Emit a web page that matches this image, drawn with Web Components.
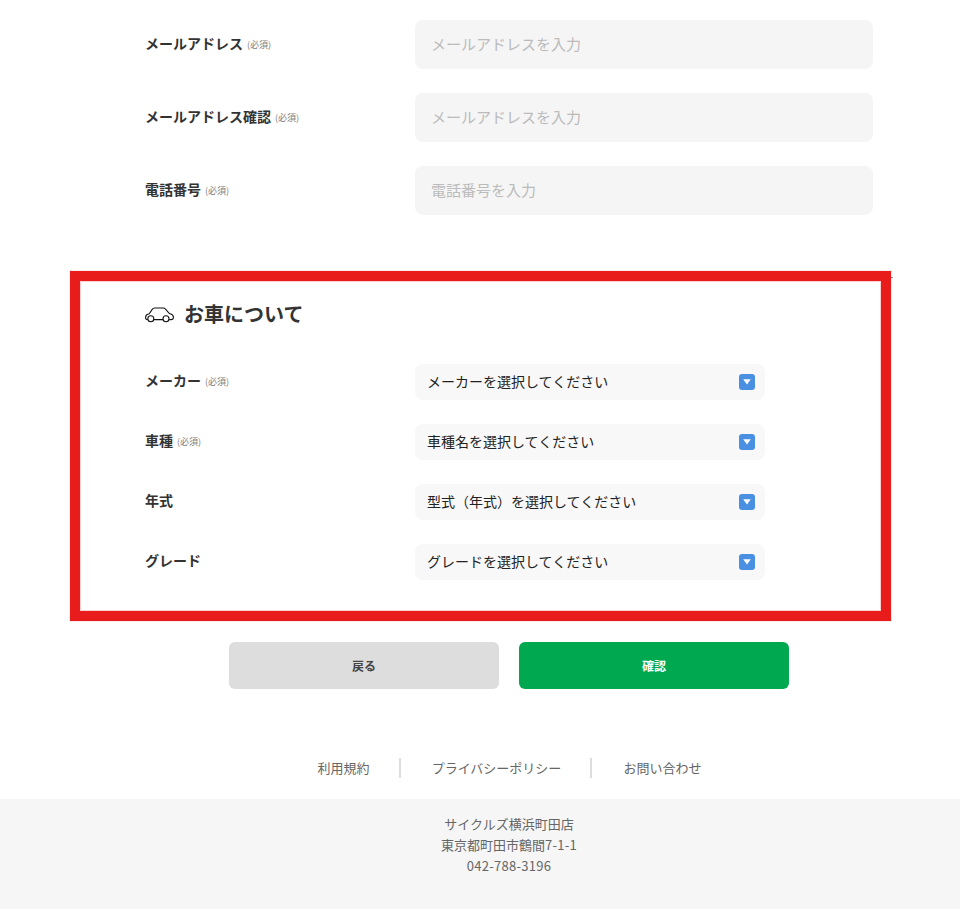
<!DOCTYPE html>
<html lang="ja"><head><meta charset="utf-8"><title>form</title>
<style>
html,body{margin:0;padding:0;background:#fff}
body{font-family:"Noto Sans CJK JP","Noto Sans",sans-serif;color:#333;height:909px;overflow:hidden}
</style></head><body>
<form-page>
  <div slot="contact">
    <form-row required label="メールアドレス"><text-field placeholder="メールアドレスを入力"></text-field></form-row>
    <form-row required label="メールアドレス確認"><text-field placeholder="メールアドレスを入力"></text-field></form-row>
    <form-row required label="電話番号"><text-field placeholder="電話番号を入力"></text-field></form-row>
  </div>
  <car-section slot="car" heading="お車について">
    <form-row required compact label="メーカー"><select-field>メーカーを選択してください</select-field></form-row>
    <form-row required compact label="車種"><select-field>車種名を選択してください</select-field></form-row>
    <form-row compact label="年式"><select-field>型式（年式）を選択してください</select-field></form-row>
    <form-row compact label="グレード"><select-field>グレードを選択してください</select-field></form-row>
  </car-section>
  <action-bar slot="actions"></action-bar>
  <foot-nav slot="nav"></foot-nav>
  <site-footer slot="footer"></site-footer>
</form-page>
<script>
function def(name,html){
  customElements.define(name,class extends HTMLElement{
    connectedCallback(){
      if(this.shadowRoot)return;
      const r=this.attachShadow({mode:'open'});
      r.innerHTML=typeof html==='function'?html(this):html;
    }
  });
}
def('form-page',`<style>
:host{display:block}
.contact{padding:20px 87px 0 145px}
.car{margin:56px 69px 0 70px}
.actions{margin-top:21px;padding-left:58px}
.nav{margin-top:69px}
.footer{margin-top:21px}
</style>
<div class="contact"><slot name="contact"></slot></div>
<div class="car"><slot name="car"></slot></div>
<div class="actions"><slot name="actions"></slot></div>
<div class="nav"><slot name="nav"></slot></div>
<div class="footer"><slot name="footer"></slot></div>`);
def('form-row',h=>`<style>
:host{display:grid;grid-template-columns:270px 1fr;align-items:center;margin-bottom:24px}
:host(:last-child){margin-bottom:0}
.l{font-size:14px;font-weight:700;line-height:20px;color:#333;white-space:nowrap;display:flex;align-items:center;gap:5px}
.t{margin-bottom:4px}
.r{font-size:9px;font-weight:400;color:#7c7c7c;line-height:12px;margin-left:-1px}
</style>
<div class="l"><span class="t">${h.getAttribute('label')}</span>${h.hasAttribute('required')?'<span class="r">(必須)</span>':''}</div>
<div><slot></slot></div>`);
def('text-field',h=>`<style>
:host{display:block;height:49px;background:#f5f5f5;border-radius:8px;padding-left:16px;box-sizing:border-box;
font-size:15px;line-height:47px;color:#bbb}
</style>${h.getAttribute('placeholder')}`);
def('select-field',`<style>
:host{display:flex;align-items:center;justify-content:space-between;width:350px;height:36px;box-sizing:border-box;
background:#f8f8f8;border-radius:8px;padding:0 10px 0 12px;font-size:14px;color:#222}
span{margin-bottom:3px}
.i{width:16px;height:16px;display:block}
</style><span><slot></slot></span>
<svg class="i" viewBox="0 0 16 16"><rect width="16" height="16" rx="3" fill="#4a90e2"/><path d="M4.200 5.300h7.600L8 10.500z" fill="#fff"/></svg>`);
def('car-section',h=>`<style>
:host{display:block;border:10px solid #e91c1c;padding:20px 0 31px 65px;box-shadow:inset 0 0 0 1px #fbd0d0,0 0 0 1px #fdeaea;position:relative}
:host::after{content:"";position:absolute;right:-12px;top:-4px;width:2px;height:1px;background:#888}
h2{margin:0 0 35px;height:28px;display:flex;align-items:center;gap:10px;font-size:20px;line-height:28px;font-weight:700;color:#333}
h2 span{margin-bottom:2px}
svg{display:block;width:29px;height:16px}
</style>
<h2><svg viewBox="0 0 29 16" fill="none" stroke="#111" stroke-width="1.100">
<path d="M2.700 12.600C1.300 12.600.6 11.800.6 10.400.6 8.600 1.600 7.400 3.400 7L4.200 6.800 7.200 2.400C7.800 1.400 8.600 1 9.800 1H18C19 1 19.800 1.300 20.500 2.200L24.400 6.600 25.800 7C27.600 7.600 28.400 8.600 28.400 10.200 28.400 11.800 27.600 12.600 26 12.600H24.200M8.800 12.600H18"/>
<circle cx="5.800" cy="11.800" r="3"/><circle cx="21" cy="11.800" r="3"/></svg><span>${h.getAttribute('heading')}</span></h2><slot></slot>`);
def('action-bar',`<style>
:host{display:flex;justify-content:center;gap:20px}
a{display:block;width:270px;height:47px;border-radius:6px;font-size:12px;font-weight:700;line-height:47px;text-align:center}
.b{background:#ddd;color:#444}.c{background:#00a94f;color:#fff}
</style><a class="b">戻る</a><a class="c">確認</a>`);
def('foot-nav',`<style>
:host{display:flex;justify-content:center;padding-left:28px;font-size:13px;line-height:20px;color:#666;height:20px}
a{display:block;padding:0 29px 0 31px;border-right:2px solid #ddd}
a:first-child{padding-left:0}a:last-child{border:0;padding-right:0}
</style><a>利用規約</a><a>プライバシーポリシー</a><a>お問い合わせ</a>`);
def('site-footer',`<style>
:host{display:block;background:#f6f6f6;height:110px;box-sizing:border-box;padding:14px 0 0 58px;text-align:center;font-size:13px;line-height:21px;color:#666}
span{letter-spacing:.28px}
</style>サイクルズ横浜町田店<br>東京都町田市鶴間<span>7-1-1</span><br><span>042-788-3196</span>`);
</script>
</body></html>
